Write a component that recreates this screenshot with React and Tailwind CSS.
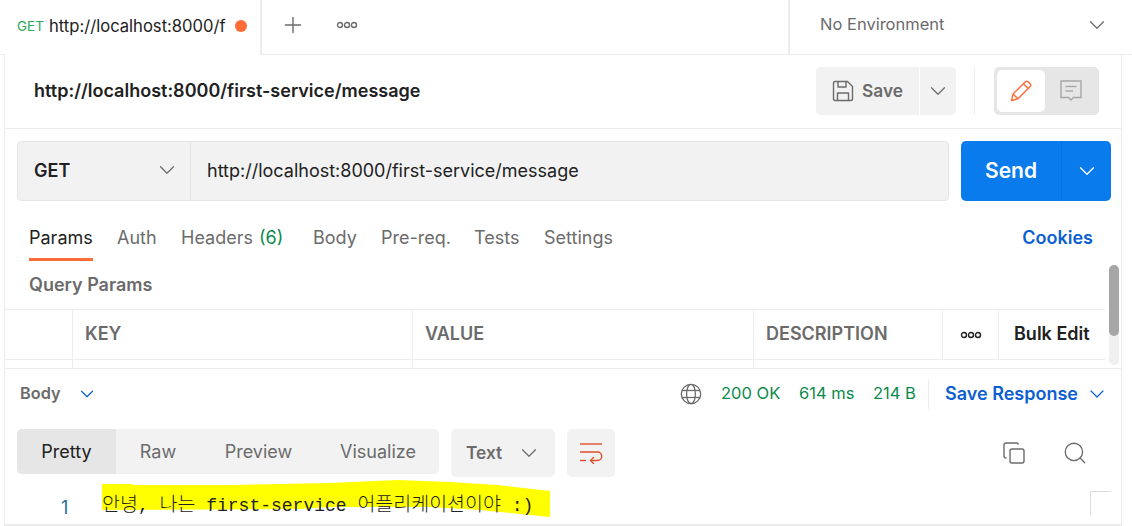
import React from "react";
import { ChevronDown, Plus, Search } from "lucide-react";

const requestTabs = [
  { label: "Params", active: true, w: "w-[64px] mr-[24px]" },
  { label: "Auth", w: "w-[40px] mr-[24px]" },
  { label: "Headers", count: "(6)", w: "w-[102px] mr-[30px]" },
  { label: "Body", w: "w-[44px] mr-[24px]" },
  { label: "Pre-req.", w: "w-[69px] mr-[24px]" },
  { label: "Tests", w: "w-[46px] mr-[24px]" },
  { label: "Settings", w: "w-[70px]" },
];

function Dots({ className }) {
  return (
    <svg width="22" height="8" viewBox="0 0 22 8" fill="none" stroke="currentColor" strokeWidth="1.4" className={className}>
      <circle cx="4" cy="4" r="2.5" />
      <circle cx="11" cy="4" r="2.5" />
      <circle cx="18" cy="4" r="2.5" />
    </svg>
  );
}

function SaveIcon() {
  return (
    <svg width="22" height="22" viewBox="0 0 22 22" fill="none" stroke="#6b6b6b" strokeWidth="1.4" strokeLinejoin="round">
      <path d="M1.5 3 a1.5 1.5 0 0 1 1.5-1.5 H15.5 L20.5 6.5 V19 a1.5 1.5 0 0 1-1.5 1.5 H3 a1.5 1.5 0 0 1-1.5-1.5 Z" />
      <path d="M6 1.5 V7 H14 V1.5" />
      <path d="M5.5 20.5 V13 H16.5 V20.5" />
    </svg>
  );
}

function PencilIcon() {
  return (
    <svg width="22" height="22" viewBox="0 0 22 22" fill="none" stroke="#ff6c37" strokeWidth="1.4" strokeLinejoin="round">
      <path d="M1.5 20.5 L3 14 L15.5 1.8 a1.8 1.8 0 0 1 2.5 0 L20.2 4 a1.8 1.8 0 0 1 0 2.5 L8 18.8 Z" />
      <path d="M3 14 L8 18.8" />
      <path d="M13.5 3.8 L18.2 8.5" />
    </svg>
  );
}

function CommentIcon() {
  return (
    <svg width="22" height="22" viewBox="0 0 22 22" fill="none" stroke="#a6a6a6" strokeWidth="1.4">
      <path d="M1 1 H21 V17.5 H13.5 L11 20 L8.5 17.5 H1 Z" />
      <path d="M5.5 6.5 H16.5" />
      <path d="M5.5 11 H13" />
    </svg>
  );
}

function GlobeIcon() {
  return (
    <svg width="22" height="22" viewBox="0 0 22 22" fill="none" stroke="#6b6b6b" strokeWidth="1.3">
      <circle cx="11" cy="11" r="9.7" />
      <ellipse cx="11" cy="11" rx="4.4" ry="9.7" />
      <path d="M2.2 7.5 H19.8" />
      <path d="M2.2 14.5 H19.8" />
    </svg>
  );
}

function WrapIcon() {
  return (
    <svg width="24" height="22" viewBox="0 0 24 22" fill="none" stroke="#e0502a" strokeWidth="1.4">
      <path d="M1 2 H23" />
      <path d="M1 10 H18.5 a4 4 0 0 1 0 8.5 H12" />
      <path d="M15 15 L11.5 18.5 L15 22" />
      <path d="M1 18.5 H7" />
    </svg>
  );
}

function CopyIcon() {
  return (
    <svg width="22" height="22" viewBox="0 0 22 22" fill="none" stroke="#6b6b6b" strokeWidth="1.4">
      <rect x="7" y="7" width="14" height="14" rx="2" />
      <path d="M3.5 16 H3 a2 2 0 0 1-2-2 V3 a2 2 0 0 1 2-2 H13.5 a2 2 0 0 1 2 1.5" />
    </svg>
  );
}

export default function App() {
  return (
    <div className="w-[1132px] h-[526px] overflow-hidden bg-white flex flex-col font-[Inter,sans-serif] text-[18px] text-[#6b6b6b]">
      {/* tab bar */}
      <div className="h-[55px] shrink-0 flex border-b border-[#ededed]">
        <div className="w-[5px] shrink-0" />
        <div className="w-[257px] shrink-0 h-[55px] bg-white border-r-2 border-[#ededed] flex items-center pl-[12px] pb-[3px]">
          <span className="text-[13.5px] text-[#2aa85a] w-[32px]">GET</span>
          <span className="text-[16.6px] text-[#212121] w-[186px] whitespace-nowrap">http://localhost:8000/f</span>
          <span className="w-[12px] h-[12px] rounded-full bg-[#ff6c37]" />
        </div>
        <div className="flex items-center pb-[5px] w-[526px]">
          <Plus size={26} strokeWidth={1.3} className="ml-[18px] text-[#6b6b6b]" />
          <Dots className="ml-[30px] text-[#6b6b6b]" />
        </div>
        <div className="flex-1 border-l-2 border-[#ededed] flex items-center pb-[5px] pl-[30px]">
          <span className="w-[264px] text-[16.5px]">No Environment</span>
          <ChevronDown size={26} strokeWidth={1.1} className="text-[#6b6b6b]" />
        </div>
      </div>

      {/* request and response panel */}
      <div className="ml-[4px] w-[1118px] h-[471px] border-x border-b-2 border-[#ededed] flex flex-col">
        <div className="h-[74px] shrink-0 flex items-center border-b border-[#ededed] pl-[29px] pb-[2px]">
          <span className="w-[782px] font-semibold text-[#212121] whitespace-nowrap">http://localhost:8000/first-service/message</span>
          <div className="flex h-[48px] w-[140px] text-[17.3px]">
            <button className="w-[103px] rounded-l-[5px] bg-[#f2f2f2] flex items-center justify-center gap-[8px] font-semibold">
              <SaveIcon />
              Save
            </button>
            <button className="ml-px flex-1 rounded-r-[5px] bg-[#f2f2f2] flex items-center justify-center">
              <ChevronDown size={26} strokeWidth={1.1} />
            </button>
          </div>
          <div className="w-px h-[48px] bg-[#ededed] ml-[18px]" />
          <div className="ml-[19px] w-[105px] h-[48px] rounded-[5px] bg-[#e6e6e6] flex items-center p-[3px]">
            <div className="w-[48px] h-[42px] rounded-[5px] bg-white flex items-center justify-center">
              <PencilIcon />
            </div>
            <div className="flex-1 flex items-center justify-center">
              <CommentIcon />
            </div>
          </div>
        </div>

        <div className="h-[60px] shrink-0 mt-[12px] flex pl-[12px]">
          <div className="w-[932px] flex border border-[#e6e6e6] rounded-[4px] bg-[#f2f2f2]">
            <div className="w-[173px] shrink-0 border-r border-[#e6e6e6] flex items-center pl-[16px] pr-[10px] pb-[2px] justify-between font-semibold text-[#212121]">
              GET
              <ChevronDown size={26} strokeWidth={1.1} className="text-[#6b6b6b]" />
            </div>
            <div className="flex-1 flex items-center pl-[16px] pb-[2px] text-[#212121]">http://localhost:8000/first-service/message</div>
          </div>
          <div className="ml-[12px] w-[150px] flex rounded-[5px] bg-[#097bed] text-white">
            <div className="w-[101px] border-r border-[#0a6fd6] flex items-center justify-center font-semibold text-[21px]">Send</div>
            <div className="flex-1 flex items-center justify-center">
              <ChevronDown size={26} strokeWidth={1.2} />
            </div>
          </div>
        </div>

        <div className="h-[60px] shrink-0 flex items-start pl-[24px] pr-[28px]">
          {requestTabs.map((tab) => (
            <div key={tab.label} className={`${tab.w} h-[60px] pt-[23px] whitespace-nowrap ${tab.active ? "border-b-[3px] border-[#ff6c37] text-[#212121]" : ""}`}>
              {tab.label}
              {tab.count && <span className="ml-[6px] text-[#0c8a4d]">{tab.count}</span>}
            </div>
          ))}
          <span className="ml-auto pt-[23px] font-semibold text-[#0d5fd1]">Cookies</span>
        </div>

        <div className="h-[107px] shrink-0 flex">
          <div className="w-[1100px] shrink-0">
            <div className="h-[48px] flex items-center pl-[24px] pb-[2px] font-semibold">Query Params</div>
            <div className="h-[51px] border-y border-[#ededed] grid grid-cols-[68px_340px_341px_189px_56px_106px] font-semibold">
              <div className="border-r border-[#ededed]" />
              <div className="border-r border-[#ededed] flex items-center pl-[12px] pb-[2px]">KEY</div>
              <div className="border-r border-[#ededed] flex items-center pl-[12px] pb-[2px]">VALUE</div>
              <div className="border-r border-[#ededed] flex items-center pl-[12px] pb-[2px]">DESCRIPTION</div>
              <div className="border-r border-[#ededed] flex items-center justify-center">
                <Dots className="text-[#212121]" />
              </div>
              <div className="flex items-center pl-[15px] pb-[2px] text-[#212121]">Bulk Edit</div>
            </div>
            <div className="h-[8px] grid grid-cols-[68px_340px_341px]">
              <div className="border-r border-[#ededed]" />
              <div className="border-r border-[#ededed]" />
              <div className="border-r border-[#ededed]" />
            </div>
          </div>
          <div className="ml-[4px] mt-[4px] w-[10px] h-[100px] rounded-full bg-[#f0f0f0]">
            <div className="h-[71px] rounded-full bg-[#a6a6a6]" />
          </div>
        </div>

        {/* response */}
        <div className="h-[50px] shrink-0 border-t border-[#ededed] flex items-center pl-[15px]">
          <span className="font-semibold text-[16.3px] w-[56px]">Body</span>
          <ChevronDown size={22} strokeWidth={1.3} className="text-[#0d5fd1]" />
          <div className="ml-[582px] w-[22px]"><GlobeIcon /></div>
          <span className="ml-[19px] w-[78px] text-[#0c8a4d] text-[16.5px] whitespace-nowrap">200 OK</span>
          <span className="w-[74px] text-[#0c8a4d] text-[16.5px] whitespace-nowrap">614 ms</span>
          <span className="w-[55px] text-[#0c8a4d] text-[16.5px] whitespace-nowrap">214 B</span>
          <div className="w-px h-[30px] bg-[#ededed]" />
          <span className="ml-[16px] font-semibold text-[#0d5fd1] whitespace-nowrap">Save Response</span>
          <ChevronDown size={24} strokeWidth={1.2} className="ml-[7px] text-[#0d5fd1]" />
        </div>

        <div className="h-[58px] shrink-0 pt-[11px] pl-[12px] flex items-start">
          <div className="w-[422px] h-[45px] rounded-[5px] bg-[#f2f2f2] flex items-center overflow-hidden">
            <div className="w-[99px] h-full bg-[#e6e6e6] flex items-center justify-center text-[#212121]">Pretty</div>
            <div className="w-[84px] text-center">Raw</div>
            <div className="w-[117px] text-center">Preview</div>
            <div className="w-[122px] text-center">Visualize</div>
          </div>
          <div className="ml-[12px] w-[104px] h-[48px] rounded-[5px] bg-[#f2f2f2] flex items-center pl-[15px] font-semibold text-[17.3px]">
            <span className="w-[50px]">Text</span>
            <ChevronDown size={26} strokeWidth={1.1} />
          </div>
          <div className="ml-[12px] w-[48px] h-[48px] rounded-[5px] bg-[#f2f2f2] flex items-center justify-center">
            <WrapIcon />
          </div>
          <div className="ml-[388px] mt-[13px] w-[22px]"><CopyIcon /></div>
          <Search size={26} strokeWidth={1.2} className="ml-[37px] mt-[11px] text-[#6b6b6b]" />
        </div>

        <div className="relative flex-1 flex items-center pl-[56px] pt-[14px]">
          <svg width="460" height="40" viewBox="0 0 460 40" className="absolute left-[96px] top-[4px]">
            <path fill="#ffff00" d="M1 4 L32 4 L32 5 L130 5 L229 3 L296 0 L349 2 L396 5 L449 11 L449 37 L379 30 L329 27 L229 27 L199 29 L1 30 Z" />
          </svg>
          <span className="relative w-[41px] text-[#1f6f9e]">1</span>
          <span className="relative text-[18px] text-[#222] whitespace-nowrap font-['Liberation_Mono','Noto_Sans_CJK_KR',monospace]">
            <span className="text-[19.5px] font-light">안녕</span>, <span className="text-[19.5px] font-light">나는</span> first-service <span className="text-[19.5px] font-light">어플리케이션이야</span> :)
          </span>
          <div className="absolute left-[1085px] top-[15px] w-[21px] h-[24px] border-l border-t border-[#dcdcdc]" />
        </div>
      </div>
    </div>
  );
}
